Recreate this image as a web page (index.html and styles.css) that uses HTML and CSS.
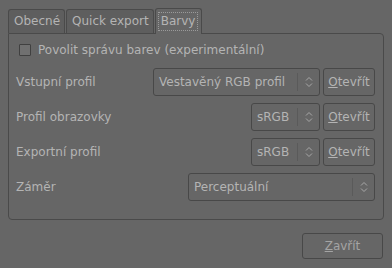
FILE: index.html
```html
<!DOCTYPE html>
<html lang="cs">
<head>
    <meta charset="UTF-8">
    <title>Barvy</title>
    <link rel="stylesheet" href="styles.css">
</head>
<body>
    <div class="dialog">
        <div class="tabs">
            <div class="tab">Obecné</div>
            <div class="tab">Quick export</div>
            <div class="tab active"><span class="focus">Barvy</span></div>
        </div>

        <div class="panel">
            <label class="check">
                <span class="box"></span>
                Povolit správu barev (experimentální)
            </label>

            <div class="row">
                <span class="label">Vstupní profil</span>
                <div class="combo wide">
                    <span class="value">Vestavěný RGB profil</span>
                    <span class="sep"></span>
                    <svg class="arrows" width="8" height="12" viewBox="0 0 8 12"><path d="M1 4.5 L4 1.5 L7 4.5 M1 7.5 L4 10.5 L7 7.5" fill="none" stroke="#a8a8a8" stroke-width="1"/></svg>
                </div>
                <button class="btn"><u>O</u>tevřít</button>
            </div>

            <div class="row">
                <span class="label">Profil obrazovky</span>
                <div class="combo small">
                    <span class="value">sRGB</span>
                    <span class="sep"></span>
                    <svg class="arrows" width="8" height="12" viewBox="0 0 8 12"><path d="M1 4.5 L4 1.5 L7 4.5 M1 7.5 L4 10.5 L7 7.5" fill="none" stroke="#a8a8a8" stroke-width="1"/></svg>
                </div>
                <button class="btn"><u>O</u>tevřít</button>
            </div>

            <div class="row">
                <span class="label">Exportní profil</span>
                <div class="combo small">
                    <span class="value">sRGB</span>
                    <span class="sep"></span>
                    <svg class="arrows" width="8" height="12" viewBox="0 0 8 12"><path d="M1 4.5 L4 1.5 L7 4.5 M1 7.5 L4 10.5 L7 7.5" fill="none" stroke="#a8a8a8" stroke-width="1"/></svg>
                </div>
                <button class="btn"><u>O</u>tevřít</button>
            </div>

            <div class="row">
                <span class="label">Záměr</span>
                <div class="combo intent">
                    <span class="value">Perceptuální</span>
                    <span class="sep"></span>
                    <svg class="arrows" width="8" height="12" viewBox="0 0 8 12"><path d="M1 4.5 L4 1.5 L7 4.5 M1 7.5 L4 10.5 L7 7.5" fill="none" stroke="#a8a8a8" stroke-width="1"/></svg>
                </div>
            </div>
        </div>

        <div class="actions">
            <button class="btn close"><u>Z</u>avřít</button>
        </div>
    </div>
</body>
</html>
```

FILE: styles.css
```css
body {
    margin: 0;
    background-color: #666666;
    font-family: 'DejaVu Sans', sans-serif;
    font-size: 12px;
    color: #b4b4b4;
}

.dialog {
    padding: 8px 8px 0 8px;
    width: 376px;
}

.tabs {
    display: flex;
    align-items: flex-end;
    height: 25px;
}

.tab {
    box-sizing: border-box;
    height: 24px;
    padding: 4px 4px 0 5px;
    background-color: #5e5e5e;
    border: 1px solid #4a4a4a;
    border-bottom: none;
    border-radius: 3px 3px 0 0;
    margin-right: 1px;
    white-space: nowrap;
}

.tab.active {
    height: 26px;
    margin-bottom: -1px;
    background-color: #666666;
    padding: 3px 3px 0 2px;
    position: relative;
    z-index: 1;
}

.focus {
    display: inline-block;
    border: 1px dotted #9a9a9a;
    padding: 1px 2px 2px 2px;
}

.panel {
    box-sizing: border-box;
    height: 187px;
    border: 1px solid #4a4a4a;
    border-radius: 0 4px 4px 4px;
    padding: 8px 8px 0 7px;
    display: flex;
    flex-direction: column;
    gap: 7px;
}

.check {
    display: flex;
    align-items: center;
    gap: 7px;
    height: 16px;
    margin: 0 0 3px 3px;
}

.box {
    box-sizing: border-box;
    width: 12px;
    height: 12px;
    border: 1px solid #404040;
    background-color: #707070;
    border-radius: 1px;
}

.row {
    display: flex;
    align-items: center;
    gap: 3px;
    height: 28px;
}

.label {
    flex: 1;
}

.combo {
    box-sizing: border-box;
    height: 28px;
    display: flex;
    align-items: center;
    border: 1px solid #484848;
    border-radius: 3px;
    padding-left: 5px;
}

.combo.wide { width: 167px; }
.combo.small { width: 69px; }
.combo.intent { width: 187px; }

.value {
    flex: 1;
    white-space: nowrap;
}

.sep {
    width: 1px;
    height: 18px;
    background-color: #5a5a5a;
    margin-right: 7px;
}

.arrows {
    margin-right: 6px;
}

.btn {
    box-sizing: border-box;
    height: 28px;
    width: 52px;
    padding: 0;
    background-color: #666666;
    border: 1px solid #484848;
    border-radius: 3px;
    font-family: inherit;
    font-size: 12px;
    color: #b4b4b4;
}

.actions {
    display: flex;
    justify-content: flex-end;
    padding: 13px 1px 0 0;
}

.btn.close {
    width: 81px;
    height: 26px;
    color: #a4a4a4;
}
```
